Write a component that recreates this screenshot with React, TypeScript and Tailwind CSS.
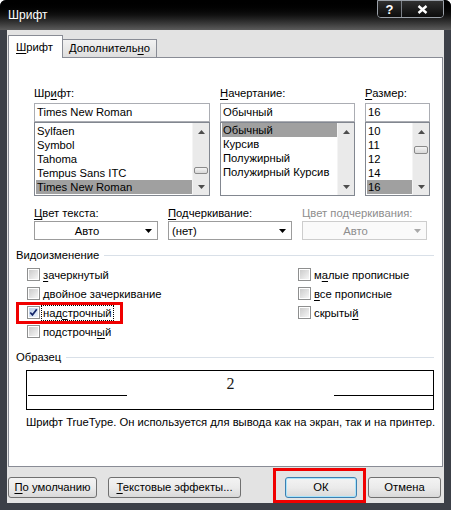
import type { ReactNode } from "react";

function U({ children }: { children: ReactNode }) {
  return <span className="underline decoration-1 underline-offset-[2px]">{children}</span>;
}

function UpArrow() {
  return (
    <svg width="7" height="4" viewBox="0 0 7 4">
      <path d="M0 4 L3.5 0 L7 4 Z" fill="#4d4d4d" />
    </svg>
  );
}

function DownArrow({ color = "#4d4d4d" }: { color?: string }) {
  return (
    <svg width="7" height="4" viewBox="0 0 7 4">
      <path d="M0 0 L7 0 L3.5 4 Z" fill={color} />
    </svg>
  );
}

function ScrollBar({ thumb }: { thumb?: ReactNode }) {
  return (
    <div className="flex w-[17px] shrink-0 flex-col border-l border-[#f4f4f4] bg-[#eaeaea]">
      <div className="flex h-[17px] items-center justify-center">
        <UpArrow />
      </div>
      <div className="flex-1 px-[1px]">{thumb}</div>
      <div className="flex h-[17px] items-center justify-center">
        <DownArrow />
      </div>
    </div>
  );
}

function Row({ text, selected }: { text: string; selected?: boolean }) {
  return (
    <div className={selected ? "h-[14px] bg-[#a0a0a0] pl-[1px] leading-[14px]" : "h-[14px] pl-[1px] leading-[14px]"}>
      {text}
    </div>
  );
}

function Combo({ text, left, disabled }: { text: string; left?: boolean; disabled?: boolean }) {
  return (
    <div
      className={
        disabled
          ? "flex h-[19px] items-center border border-[#cdcdcd] bg-[#fafafa] text-[#8d8d8d]"
          : "flex h-[19px] items-center border border-[#9c9c9c] bg-white"
      }
    >
      <span className={left ? "flex-1 pl-[3px] leading-[16px]" : "flex-1 text-center leading-[16px]"}>{text}</span>
      <span className="flex w-[18px] justify-center">
        <DownArrow color={disabled ? "#a9a9a9" : "#000000"} />
      </span>
    </div>
  );
}

function Box({ checked }: { checked?: boolean }) {
  return (
    <span className="flex h-[13px] w-[13px] shrink-0 border border-[#8e8f8f] bg-white p-[1px]">
      <span
        className={
          checked
            ? "flex h-full w-full items-center justify-center bg-gradient-to-br from-[#b9cee8] to-[#eef4fc]"
            : "block h-full w-full bg-gradient-to-br from-[#cbcbcb] to-[#f6f6f6]"
        }
      >
        {checked && (
          <svg width="11" height="11" viewBox="0 0 11 11" className="-mt-[1px]">
            <path d="M1.5 5.5 L4.2 8.5 L9.5 1.5" stroke="#14266b" strokeWidth="2.2" fill="none" />
          </svg>
        )}
      </span>
    </span>
  );
}

function Option({ children, checked }: { children: ReactNode; checked?: boolean }) {
  return (
    <div className="flex h-[19px] items-center gap-[3px]">
      <Box checked={checked} />
      <span className="leading-[16px]">{children}</span>
    </div>
  );
}

function Button({ children, className }: { children: ReactNode; className: string }) {
  return (
    <div
      className={
        "flex h-[21px] items-center justify-center rounded-[3px] border bg-gradient-to-b from-[#f3f3f3] via-[#ebebeb] to-[#d9d9d9] " +
        className
      }
    >
      {children}
    </div>
  );
}

export default function App() {
  return (
    <div className="h-[510px] w-[451px] bg-white font-['Liberation_Sans',Arial,sans-serif] text-[11.25px] text-black">
      <div className="flex h-full flex-col rounded-t-[6px] bg-[#3c4048]">
        {/* title bar */}
        <div className="flex h-[30px] shrink-0 items-start justify-between rounded-t-[6px] bg-gradient-to-b from-[#000000] via-[#111111] to-[#5c5c5c] pl-[8px] pr-[7px]">
          <span className="mt-[8px] text-[12px] leading-[14px] text-white">Шрифт</span>
          <div className="flex h-[18px] overflow-hidden rounded-b-[4px] border border-[#9aa0a8]">
            <div className="flex w-[24px] items-center justify-center border-r border-[#7b8087] bg-gradient-to-b from-[#303030] to-[#0c0c0c] text-[13px] font-bold leading-none text-white">
              ?
            </div>
            <div className="flex w-[41px] items-center justify-center bg-gradient-to-b from-[#303030] to-[#0c0c0c]">
              <svg width="11" height="9" viewBox="0 0 11 9">
                <path d="M1.5 1 L9.5 8 M9.5 1 L1.5 8" stroke="#ffffff" strokeWidth="2.4" />
              </svg>
            </div>
          </div>
        </div>

        {/* body */}
        <div className="mx-[7px] flex h-[473px] flex-col bg-[#e3e3e3] px-[1px] pt-[5px]">
          <div className="flex h-[22px] items-end">
            <div className="relative z-10 -mb-[1px] h-[23px] w-[55px] border border-b-0 border-[#898c95] bg-white pl-[7px] pt-[4px] leading-[14px]">
              <U>Ш</U>рифт
            </div>
            <div className="h-[18px] w-[94px] border border-b-0 border-l-0 border-[#898c95] bg-gradient-to-b from-[#f2f2f2] to-[#dedede] pl-[6px] pt-[1px] leading-[14px]">
              Дополнитель<U>н</U>о
            </div>
          </div>

          <div className="h-[410px] w-[435px] border border-[#898c95] bg-white">
            {/* font / style / size */}
            <div className="flex gap-[10px] pl-[25px] pt-[27px]">
              <div className="w-[176px]">
                <div className="mb-[2px] h-[16px] leading-[16px]">
                  Шр<U>и</U>фт:
                </div>
                <div className="h-[19px] border border-[#abadb3] pl-[2px] leading-[17px]">Times New Roman</div>
                <div className="flex h-[74px] border border-[#828790]">
                  <div className="flex-1 pl-[1px] pt-[1px]">
                    <Row text="Sylfaen" />
                    <Row text="Symbol" />
                    <Row text="Tahoma" />
                    <Row text="Tempus Sans ITC" />
                    <Row text="Times New Roman" selected />
                  </div>
                  <ScrollBar
                    thumb={<div className="mt-[27px] h-[7px] rounded-[2px] border border-[#8a8a8a] bg-gradient-to-b from-[#f4f4f4] to-[#d8d8d8]" />}
                  />
                </div>
              </div>
              <div className="w-[135px]">
                <div className="mb-[2px] h-[16px] leading-[16px]">
                  <U>Н</U>ачертание:
                </div>
                <div className="h-[19px] border border-[#abadb3] pl-[2px] leading-[17px]">Обычный</div>
                <div className="flex h-[74px] border border-[#828790]">
                  <div className="flex-1 pl-[1px]">
                    <Row text="Обычный" selected />
                    <Row text="Курсив" />
                    <Row text="Полужирный" />
                    <Row text="Полужирный Курсив" />
                  </div>
                  <ScrollBar />
                </div>
              </div>
              <div className="w-[65px]">
                <div className="mb-[2px] h-[16px] leading-[16px]">
                  <U>Р</U>азмер:
                </div>
                <div className="h-[19px] border border-[#abadb3] pl-[2px] leading-[17px]">16</div>
                <div className="flex h-[74px] border border-[#828790]">
                  <div className="flex-1 pl-[1px] pt-[1px]">
                    <Row text="10" />
                    <Row text="11" />
                    <Row text="12" />
                    <Row text="14" />
                    <Row text="16" selected />
                  </div>
                  <ScrollBar
                    thumb={<div className="mt-[6px] h-[8px] rounded-[2px] border border-[#8a8a8a] bg-gradient-to-b from-[#f4f4f4] to-[#d8d8d8]" />}
                  />
                </div>
              </div>
            </div>

            {/* colours / underline */}
            <div className="mt-[9px] flex gap-[10px] pl-[25px]">
              <div className="w-[124px]">
                <div className="h-[16px] leading-[16px]">
                  <U>Ц</U>вет текста:
                </div>
                <Combo text="Авто" />
              </div>
              <div className="w-[124px]">
                <div className="h-[16px] leading-[16px]">
                  <U>П</U>одчеркивание:
                </div>
                <Combo text="(нет)" left />
              </div>
              <div className="w-[125px]">
                <div className="h-[16px] leading-[16px] text-[#8d8d8d]">Цвет подчеркивания:</div>
                <Combo text="Авто" disabled />
              </div>
            </div>

            {/* effects */}
            <div className="mt-[7px] flex h-[16px] items-center pl-[7px] pr-[8px]">
              <span className="leading-[16px]">Видоизменение</span>
              <span className="ml-[5px] h-[1px] flex-1 bg-[#d9e0e8]" />
            </div>
            <div className="mt-[2px] flex pl-[18px]">
              <div className="w-[271px]">
                <Option>
                  <U>з</U>ачеркнутый
                </Option>
                <Option>двойное зачеркивание</Option>
                <div className="relative flex h-[19px] items-center gap-[1px]">
                  <Box checked />
                  <span className="border border-dotted border-black px-[1px] leading-[14px]">
                    над<U>с</U>трочный
                  </span>
                  <div className="absolute -left-[11px] -top-[1px] h-[22px] w-[107px] border-[3px] border-[#f00000]" />
                </div>
                <Option>
                  подстрочн<U>ы</U>й
                </Option>
              </div>
              <div>
                <Option>
                  м<U>а</U>лые прописные
                </Option>
                <Option>
                  <U>в</U>се прописные
                </Option>
                <Option>
                  скрыты<U>й</U>
                </Option>
              </div>
            </div>

            {/* sample */}
            <div className="mt-[8px] flex h-[16px] items-center pl-[7px] pr-[8px]">
              <span className="leading-[16px]">Образец</span>
              <span className="ml-[5px] h-[1px] flex-1 bg-[#d9e0e8]" />
            </div>
            <div className="ml-[17px] mt-[5px] h-[40px] w-[408px] border border-black">
              <div className="flex h-[25px] items-end pl-[1px]">
                <div className="h-[1px] w-[99px] bg-black" />
                <div className="flex flex-1 justify-center">
                  <span className="mb-[4px] font-['Liberation_Serif',serif] text-[16px] leading-[16px] text-[#1a1a1a]">2</span>
                </div>
                <div className="h-[1px] w-[99px] bg-black" />
              </div>
            </div>
            <div className="ml-[17px] mt-[4px] h-[16px] leading-[16px]">
              Шрифт TrueType. Он используется для вывода как на экран, так и на принтер.
            </div>
          </div>

          {/* buttons */}
          <div className="mt-[1px] flex items-start">
            <Button className="mt-[9px] w-[89px] border-[#707070]">
              <span>
                <U>П</U>о умолчанию
              </span>
            </Button>
            <Button className="ml-[11px] mt-[9px] w-[133px] border-[#707070]">
              <span>
                <U>Т</U>екстовые эффекты...
              </span>
            </Button>
            <div className="ml-[32px] h-[35px] w-[93px] border-[3px] border-[#f00000] pl-[9px] pt-[6px]">
              <Button className="w-[72px] border-[#3c7fb1] shadow-[inset_0_0_0_1px_#a8e4fb]">ОК</Button>
            </div>
            <Button className="ml-[2px] mt-[9px] w-[73px] border-[#707070]">Отмена</Button>
          </div>
        </div>
        <div className="h-[7px]" />
      </div>
    </div>
  );
}
